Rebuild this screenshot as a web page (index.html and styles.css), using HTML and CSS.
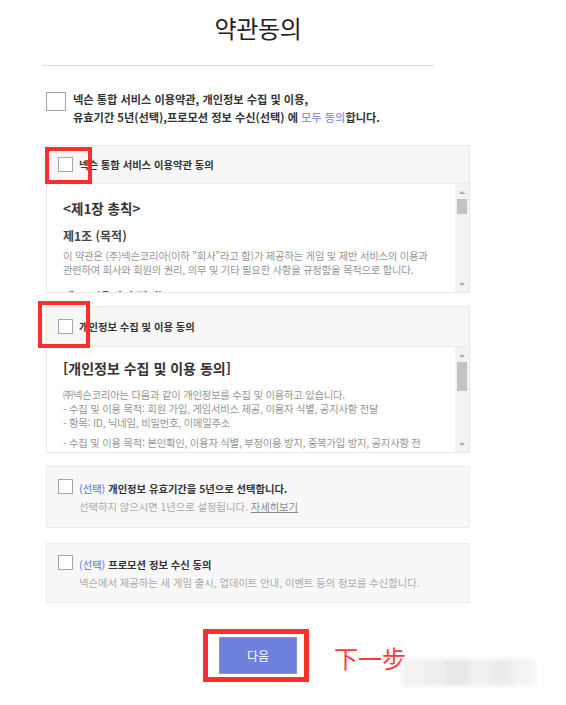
FILE: index.html
```html
<!DOCTYPE html>
<html lang="ko">
<head>
<meta charset="utf-8">
<title>약관동의</title>
<link rel="stylesheet" href="styles.css">
</head>
<body>
<div class="wrap">
  <h1 class="title">약관동의</h1>
  <div class="rule"></div>

  <div class="all-row">
    <span class="cb cb-lg"></span>
    <div class="all-text">
      <div>넥슨 통합 서비스 이용약관, 개인정보 수집 및 이용,</div>
      <div>유효기간 5년(선택),프로모션 정보 수신(선택) 에 <span class="blue">모두 동의</span>합니다.</div>
    </div>
  </div>

  <div class="term term-1">
    <div class="term-head">
      <span class="cb"></span>
      <span class="head-label">넥슨 통합 서비스 이용약관 동의</span>
      <span class="mark mark-1"></span>
    </div>
    <div class="term-body">
      <div class="term-text t1">
        <div class="h-big">&lt;제1장 총칙&gt;</div>
        <div class="h-mid">제1조 (목적)</div>
        <div class="para">
          <div>이 약관은 (주)넥슨코리아(이하 "회사"라고 함)가 제공하는 게임 및 제반 서비스의 이용과</div>
          <div>관련하여 회사와 회원의 권리, 의무 및 기타 필요한 사항을 규정함을 목적으로 합니다.</div>
        </div>
        <div class="h-mid h-next">제2조 (용어의 정의)</div>
      </div>
      <div class="sbar">
        <span class="arr up"></span>
        <span class="thumb thumb-1"></span>
        <span class="arr down"></span>
      </div>
    </div>
  </div>

  <div class="term term-2">
    <div class="term-head head-2">
      <span class="cb"></span>
      <span class="head-label">개인정보 수집 및 이용 동의</span>
      <span class="mark mark-2"></span>
    </div>
    <div class="term-body body-2">
      <div class="term-text t2">
        <div class="h-big2">[개인정보 수집 및 이용 동의]</div>
        <div class="para para-2">
          <div>㈜넥슨코리아는 다음과 같이 개인정보를 수집 및 이용하고 있습니다.</div>
          <div>- 수집 및 이용 목적: 회원 가입, 게임서비스 제공, 이용자 식별, 공지사항 전달</div>
          <div>- 항목: ID, 닉네임, 비밀번호, 이메일주소</div>
        </div>
        <div class="para para-3">
          <div>- 수집 및 이용 목적: 본인확인, 이용자 식별, 부정이용 방지, 중복가입 방지, 공지사항 전</div>
          <div>달</div>
        </div>
      </div>
      <div class="sbar">
        <span class="arr up"></span>
        <span class="thumb thumb-2"></span>
        <span class="arr down"></span>
      </div>
    </div>
  </div>

  <div class="opt opt-1">
    <span class="cb"></span>
    <div class="opt-text">
      <div class="opt-title"><span class="sel">(선택)</span> 개인정보 유효기간을 5년으로 선택합니다.</div>
      <div class="opt-desc">선택하지 않으시면 1년으로 설정됩니다. <span class="more">자세히보기</span></div>
    </div>
  </div>

  <div class="opt opt-2">
    <span class="cb"></span>
    <div class="opt-text">
      <div class="opt-title"><span class="sel">(선택)</span> 프로모션 정보 수신 동의</div>
      <div class="opt-desc">넥슨에서 제공하는 새 게임 출시, 업데이트 안내, 이벤트 등의 정보를 수신합니다.</div>
    </div>
  </div>

  <div class="btn-row">
    <div class="btn-holder">
      <button class="btn">다음</button>
      <span class="mark mark-3"></span>
      <span class="note">下一步</span>
      <span class="smudge">
        <i class="s1"></i><i class="s2"></i><i class="s3"></i><i class="s4"></i><i class="s5"></i><i class="s6"></i>
      </span>
    </div>
  </div>
</div>
</body>
</html>
```

FILE: styles.css
```css
html, body {
  margin: 0;
  padding: 0;
  background: #fff;
}
body {
  width: 566px;
  height: 705px;
  overflow: hidden;
  font-family: "Noto Sans CJK KR", "Noto Sans", sans-serif;
  color: #333;
}
.wrap {
  margin-left: 46px;
  width: 424px;
}
.title {
  margin: 0;
  height: 56px;
  line-height: 56px;
  text-align: center;
  font-size: 24px;
  font-weight: 400;
  color: #222;
  letter-spacing: -0.3px;
}
.rule {
  margin: 9px 0 0 -4px;
  width: 392px;
  height: 1px;
  background: #dedede;
}

.cb {
  display: block;
  flex: none;
  width: 13px;
  height: 13px;
  border: 1px solid #a5a5a5;
  background: #fff;
}
.cb-lg {
  width: 18px;
  height: 17px;
  margin-top: 2px;
}

.all-row {
  display: flex;
  align-items: flex-start;
  gap: 7px;
  margin-top: 24px;
}
.all-text {
  font-size: 11.2px;
  line-height: 18px;
  font-weight: 700;
  color: #333;
  white-space: nowrap;
}
.blue {
  color: #6f82e0;
  font-weight: 400;
}

.term {
  margin-top: 19px;
  border: 1px solid #e9e9e9;
  background: #f7f7f7;
}
.term-2 {
  margin-top: 13px;
}
.term-head {
  position: relative;
  height: 37px;
  display: flex;
  align-items: center;
  gap: 6px;
  padding-left: 11px;
}
.head-2 {
  height: 39px;
}
.head-label {
  font-size: 10.3px;
  font-weight: 700;
  color: #333;
  white-space: nowrap;
}
.term-body {
  height: 108px;
  display: flex;
  background: #fff;
  border-top: 1px solid #ececec;
}
.body-2 {
  height: 105px;
}
.term-text {
  flex: 1;
  overflow: hidden;
  padding-left: 16px;
  white-space: nowrap;
}
.t1 {
  padding-top: 14px;
}
.t2 {
  padding-top: 10px;
}
.h-big {
  font-size: 13.5px;
  font-weight: 700;
  line-height: 20px;
  color: #333;
}
.h-mid {
  margin-top: 9px;
  font-size: 12px;
  font-weight: 700;
  line-height: 18px;
  color: #444;
}
.h-next {
  margin-top: 11px;
}
.para {
  margin-top: 4px;
  font-size: 10.3px;
  line-height: 14px;
  color: #969696;
  letter-spacing: -0.2px;
}
.h-big2 {
  font-size: 14px;
  font-weight: 700;
  line-height: 22px;
  color: #333;
}
.para-2 {
  margin-top: 9px;
}
.para-3 {
  margin-top: 6px;
}

.sbar {
  flex: none;
  width: 14px;
  background: #f3f3f3;
  display: flex;
  flex-direction: column;
  align-items: center;
}
.arr {
  width: 0;
  height: 0;
  border-left: 3px solid transparent;
  border-right: 3px solid transparent;
}
.up {
  margin-top: 7px;
  border-bottom: 3px solid #a8a8a8;
}
.down {
  margin-top: auto;
  margin-bottom: 6px;
  border-top: 3px solid #a8a8a8;
}
.thumb {
  width: 10px;
  background: #c3c3c3;
}
.thumb-1 {
  margin-top: 5px;
  height: 15px;
}
.thumb-2 {
  margin-top: 5px;
  height: 29px;
}

.opt {
  margin-top: 13px;
  border: 1px solid #ececec;
  background: #f8f8f8;
  display: flex;
  align-items: flex-start;
  gap: 6px;
  padding: 12px 11px;
}
.opt-2 {
  margin-top: 15px;
  padding: 11px 11px;
}
.opt-text {
  white-space: nowrap;
}
.opt-title {
  font-size: 10.3px;
  line-height: 20px;
  font-weight: 700;
  color: #333;
}
.sel {
  color: #7587e0;
  font-weight: 500;
}
.opt-desc {
  font-size: 10.3px;
  line-height: 16px;
  color: #aaa;
}
.more {
  color: #8a8a8a;
  text-decoration: underline;
}

.btn-row {
  margin-top: 34px;
  display: flex;
  justify-content: center;
}
.btn-holder {
  position: relative;
}
.btn {
  display: block;
  width: 78px;
  height: 37px;
  margin: 0;
  padding: 0;
  border: 1px solid #8595e6;
  background: #6c80dc;
  color: #fff;
  font-family: "Noto Sans CJK KR", sans-serif;
  font-size: 12px;
}

.mark {
  position: absolute;
  border: 4px solid #ff2e2e;
  box-sizing: border-box;
}
.mark-1 {
  left: -2px;
  top: 1px;
  width: 47px;
  height: 37px;
}
.mark-2 {
  left: -9px;
  top: -6px;
  width: 52px;
  height: 47px;
}
.mark-3 {
  left: -16px;
  top: -8px;
  width: 106px;
  height: 53px;
  border-width: 5px;
}
.note {
  position: absolute;
  left: 115px;
  top: 7px;
  font-family: "Noto Sans CJK SC", sans-serif;
  font-size: 24px;
  line-height: 28px;
  color: #ff3838;
  white-space: nowrap;
}
.smudge {
  position: absolute;
  left: 183px;
  top: 22px;
  width: 133px;
  height: 27px;
  display: flex;
  filter: blur(2px);
}
.smudge i {
  display: block;
  flex: 1;
  background: #efefef;
}
.smudge .s1 { background: #f4f1f1; }
.smudge .s2 { background: #eeeeee; }
.smudge .s3 { background: #e8e8e8; }
.smudge .s4 { background: #f0f0f0; }
.smudge .s5 { background: #ececec; }
.smudge .s6 { background: #f4f4f4; }
```
